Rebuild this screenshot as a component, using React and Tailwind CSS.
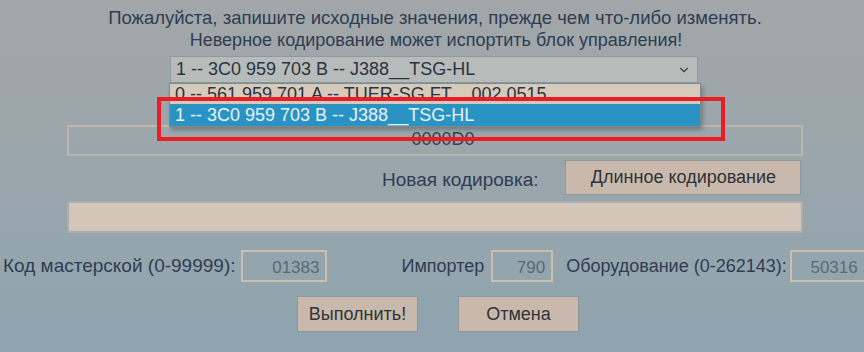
import { ChevronDown } from "lucide-react";

function NumBox({ value, className }) {
  return (
    <div
      className={`shrink-0 h-[32px] border-2 border-[#cdbfae] text-right pr-[6px] pt-[3px] text-[17px] text-[#5d6a74] ${className}`}
    >
      {value}
    </div>
  );
}

function FlatButton({ children, className }) {
  return (
    <div
      className={`flex items-center justify-center border border-[#8e979b] bg-[#c9b9ad] text-[#2f3336] text-[18px] ${className}`}
    >
      {children}
    </div>
  );
}

export default function App() {
  return (
    <div
      className="relative w-[864px] h-[352px] overflow-hidden bg-linear-to-b from-[#a2a6a8] via-[#9aa6ac] to-[#8ea4af] text-[#2f3d52]"
      style={{ fontFamily: '"Liberation Sans", Arial, sans-serif' }}
    >
      {/* Warning text */}
      <div className="pt-[7px] text-center leading-[22px]">
        <p className="pl-[6px] text-[18.5px]">Пожалуйста, запишите исходные значения, прежде чем что-либо изменять.</p>
        <p className="pl-[8px] text-[18px]">Неверное кодирование может испортить блок управления!</p>
      </div>

      {/* Select with open list */}
      <div className="relative ml-[170px] mt-[5px] w-[528px] h-[27px] border border-[#8d9a9f] bg-[#b7bbba] flex items-center justify-between pl-[5px] pr-[6px] text-[18px] text-[#2a3440]">
        <span>1 -- 3C0 959 703 B -- J388__TSG-HL</span>
        <ChevronDown size={14} strokeWidth={2} className="text-[#3a4550]" />
        <div className="absolute left-[-2px] top-[26px] w-[532px] z-10 border border-[#7f8a8f] shadow-[2px_3px_4px_rgba(0,0,0,0.25)]">
          <div className="h-[20px] bg-[#d6cabd] pl-[5px] leading-[20px] text-[#2a3440] whitespace-pre">
            0 -- 561 959 701 A -- TUER-SG FT    002 0515
          </div>
          <div className="h-[22px] bg-[#2b93c4] pl-[5px] leading-[22px] text-[#e6f2f8]">
            1 -- 3C0 959 703 B -- J388__TSG-HL
          </div>
        </div>
      </div>

      {/* Current coding field */}
      <div className="ml-[67px] mt-[42px] w-[736px] h-[31px] border-2 border-[#bdb6ac] text-center text-[18px] leading-[24px] text-[#34404f]">
        <span className="pl-[16px]">0000D0</span>
      </div>

      {/* New coding row */}
      <div className="mt-[4px] flex items-center h-[35px]">
        <span className="ml-[382px] pt-[6px] text-[19px] whitespace-nowrap">Новая кодировка:</span>
        <FlatButton className="ml-[27px] w-[236px] h-[35px] bg-[#c8bbb0]">Длинное кодирование</FlatButton>
      </div>

      {/* New coding input */}
      <div className="ml-[67px] mt-[6px] w-[736px] h-[32px] border-2 border-[#a9aeae] bg-[#d3c6b9]" />

      {/* Numbers row */}
      <div className="mt-[17px] flex items-center h-[32px] text-[18px] whitespace-nowrap">
        <span className="shrink-0 ml-[3px] text-[19px]">Код мастерской (0-99999):</span>
        <NumBox value="01383" className="ml-[6px] w-[86px]" />
        <span className="shrink-0 ml-[74px]">Импортер</span>
        <NumBox value="790" className="ml-[7px] w-[62px]" />
        <span className="shrink-0 ml-[13px]">Оборудование (0-262143):</span>
        <NumBox value="50316" className="ml-[3px] w-[76px]" />
      </div>

      {/* Action buttons */}
      <div className="mt-[14px] flex">
        <FlatButton className="ml-[297px] w-[121px] h-[36px]">Выполнить!</FlatButton>
        <FlatButton className="ml-[40px] w-[121px] h-[36px]">Отмена</FlatButton>
      </div>

      {/* Red highlight frame */}
      <div className="absolute left-[157px] top-[97px] w-[568px] h-[44px] border-[4px] border-[#ec1c24] z-20" />
    </div>
  );
}
